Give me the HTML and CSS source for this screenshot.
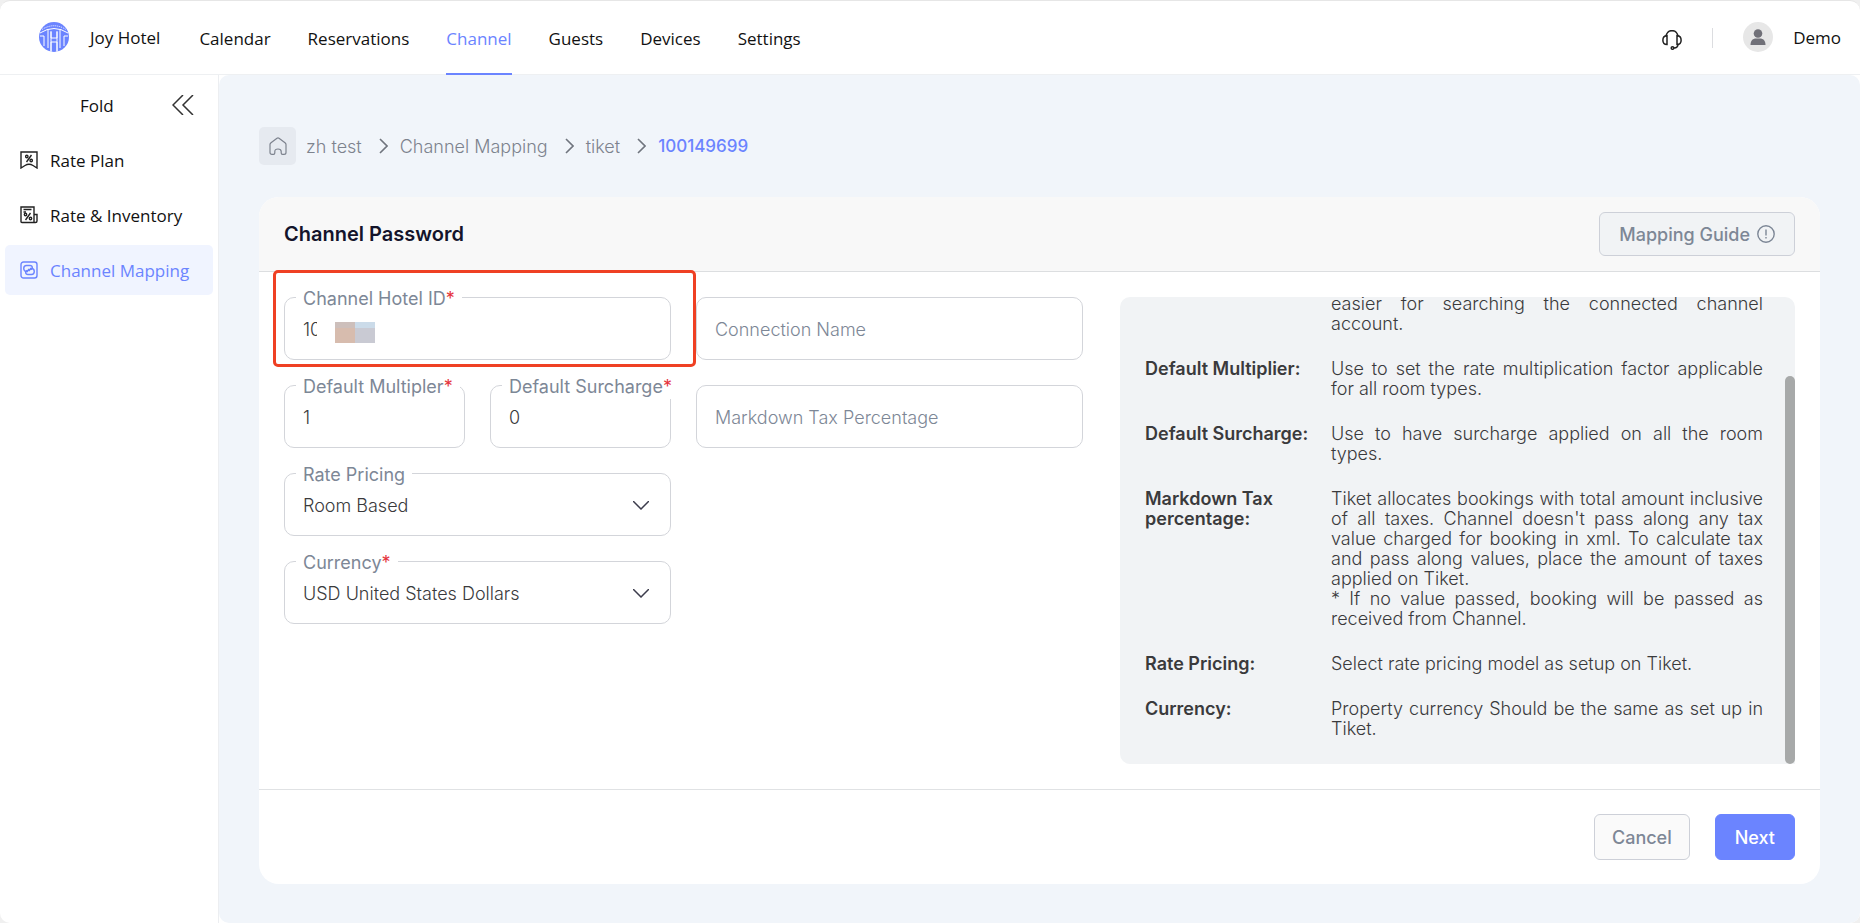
FILE: index.html
```html
<!DOCTYPE html>
<html lang="en">

<head>
    <meta charset="utf-8">
    <title>Channel Mapping</title>
    <link rel="stylesheet" href="styles.css">
</head>

<body>
    <div class="app">
        <header class="topbar">
            <svg class="logo" viewBox="0 0 30 30" width="30" height="30">
                <circle cx="15" cy="15" r="15" fill="#6b84ff" />
                <g stroke="#fff" fill="none">
                    <path d="M1 11Q15 2 29 11" stroke-width="1" />
                    <path d="M3 7.500Q15 0 27 7.500" stroke-width="1" stroke-dasharray="1 1" />
                    <path d="M1 14H5V24M9 8V26M12 10V29M18 10V29M21 8V26M25 24V14H29" stroke-width="1" />
                    <path d="M12 9V16H18V9M12 30V20H18V30" stroke-width="1" />
                </g>
            </svg>
            <span class="hotel-name">Joy Hotel</span>
            <nav class="main-nav">
                <a href="#">Calendar</a>
                <a href="#">Reservations</a>
                <a href="#" class="active">Channel</a>
                <a href="#">Guests</a>
                <a href="#">Devices</a>
                <a href="#">Settings</a>
            </nav>
            <div class="user-area">
                <button class="support" aria-label="Support">
                    <svg viewBox="0 0 20 20" width="20" height="20" fill="none" stroke="#222" stroke-width="1.500">
                        <path d="M4 7C4 -1.500 16 -1.500 16 7" />
                        <path d="M5 5.500V14.500C-.500 14.500 -.500 6 5 5.500ZM15 5.500V14.500C20.500 14.500 20.500 6 15 5.500Z" />
                        <path d="M16 14C16 17 14 18 12 18" />
                        <circle cx="10.500" cy="18" r="1.300" />
                    </svg>
                </button>
                <span class="divider"></span>
                <svg class="avatar" viewBox="0 0 30 30" width="30" height="30">
                    <circle cx="15" cy="15" r="15" fill="#e7e7e7" />
                    <circle cx="15" cy="11.500" r="4.300" fill="#707078" />
                    <path d="M7.500 23C7.500 18.500 10 16.500 13 16.500H17C20 16.500 22.500 18.500 22.500 23Z" fill="#707078" />
                </svg>
                <span>Demo</span>
            </div>
        </header>

        <div class="layout">
            <aside class="sidebar">
                <div class="fold">
                    <span>Fold</span>
                    <button aria-label="Fold menu">
                        <svg viewBox="0 0 22 20" width="22" height="20" fill="none" stroke="#333" stroke-width="1.500">
                            <path d="M11 0L1 10L11 20M21 0L11 10L21 20" />
                        </svg>
                    </button>
                </div>
                <nav class="side-nav">
                    <a href="#">
                        <svg viewBox="0 0 18 18" width="18" height="18" fill="none" stroke="#222" stroke-width="1.400">
                            <path d="M1 1H17V17L13 14.500Q9 12 5 14.500L1 17Z" />
                            <path d="M11.500 4L6.500 11" />
                            <circle cx="6.800" cy="5.500" r="1.200" />
                            <circle cx="11.200" cy="9.500" r="1.200" />
                        </svg>
                        Rate Plan
                    </a>
                    <a href="#">
                        <svg viewBox="0 0 18 18" width="18" height="18" fill="none" stroke="#222" stroke-width="1.400">
                            <path d="M1 1H14V16.500H2Q1 16.500 1 15.500ZM14 8.500H17V15Q17 16.500 15.500 16.500H13M3.500 3.500H11.500M3.500 6H6" />
                            <path d="M10.500 7L5.500 14" />
                            <circle cx="5.500" cy="8.500" r="1.200" />
                            <circle cx="10.500" cy="12.500" r="1.200" />
                        </svg>
                        Rate &amp; Inventory
                    </a>
                    <a href="#" class="active">
                        <svg viewBox="0 0 18 18" width="18" height="18" fill="none" stroke="#6b84ff" stroke-width="1.400">
                            <rect x="1" y="1" width="16" height="16" rx="2.500" />
                            <path d="M8 10.500H6.500C2.800 10.500 2.800 4.500 6.500 4.500H10C13 4.500 13 8.500 10.500 8.500H8" />
                            <path d="M10 7.500H11.500C15.200 7.500 15.200 13.500 11.500 13.500H8C5 13.500 5 9.500 7.500 9.500H10" />
                        </svg>
                        Channel Mapping
                    </a>
                </nav>
            </aside>

            <main class="content">
                <nav class="breadcrumb">
                    <a href="#" class="home" aria-label="Home">
                        <svg viewBox="0 0 18 18" width="18" height="18" fill="none" stroke="#7d838e" stroke-width="1.200">
                            <path d="M1 7.500Q1 6.500 2 5.700L8 1.200Q9 .500 10 1.200L16 5.700Q17 6.500 17 7.500V15.500Q17 17.400 15 17.400H13.500Q12.200 17.400 12.200 16V14.500Q12.200 12 9 12Q5.800 12 5.800 14.500V16Q5.800 17.400 4.500 17.400H3Q1 17.400 1 15.500Z" />
                        </svg>
                    </a>
                    <a href="#">zh test</a>
                    <svg class="sep" viewBox="0 0 9 16" width="9" height="16"><path d="M1 1L8 8L1 15" /></svg>
                    <a href="#">Channel Mapping</a>
                    <svg class="sep" viewBox="0 0 9 16" width="9" height="16"><path d="M1 1L8 8L1 15" /></svg>
                    <a href="#">tiket</a>
                    <svg class="sep" viewBox="0 0 9 16" width="9" height="16"><path d="M1 1L8 8L1 15" /></svg>
                    <span class="current">100149699</span>
                </nav>

                <section class="card">
                    <div class="card-header">
                        <h1>Channel Password</h1>
                        <button class="btn guide">
                            Mapping Guide
                            <svg viewBox="0 0 18 18" width="18" height="18" fill="none" stroke="#7d8796" stroke-width="1.400">
                                <circle cx="9" cy="9" r="8.200" />
                                <path d="M9 4.500V10.500M9 12V13.500" />
                            </svg>
                        </button>
                    </div>

                    <div class="card-body">
                        <form class="fields" id="channelForm">
                            <div class="field half highlight">
                                <label for="hotelId">Channel Hotel ID<span class="req">*</span></label>
                                <input type="text" id="hotelId" value="10">
                                <div class="mosaic"><i></i><i></i><i></i><i></i></div>
                            </div>
                            <div class="field half">
                                <input type="text" id="connectionName" placeholder="Connection Name" aria-label="Connection Name">
                            </div>
                            <div class="field">
                                <label for="multiplier">Default Multipler<span class="req">*</span></label>
                                <input type="text" id="multiplier" value="1">
                            </div>
                            <div class="field">
                                <label for="surcharge">Default Surcharge<span class="req">*</span></label>
                                <input type="text" id="surcharge" value="0">
                            </div>
                            <div class="field half">
                                <input type="text" id="markdownTax" placeholder="Markdown Tax Percentage" aria-label="Markdown Tax Percentage">
                            </div>
                            <div class="field half first">
                                <label for="ratePricing">Rate Pricing</label>
                                <select id="ratePricing">
                                    <option>Room Based</option>
                                </select>
                                <svg class="arrow" viewBox="0 0 16 9" width="16" height="9"><path d="M0 0L8 8L16 0" /></svg>
                            </div>
                            <div class="field half first">
                                <label for="currency">Currency<span class="req">*</span></label>
                                <select id="currency">
                                    <option>USD United States Dollars</option>
                                </select>
                                <svg class="arrow" viewBox="0 0 16 9" width="16" height="9"><path d="M0 0L8 8L16 0" /></svg>
                            </div>
                        </form>

                        <div class="help">
                            <dl>
                                <dt></dt>
                                <dd>easier for searching the connected channel account.</dd>
                                <dt>Default Multiplier:</dt>
                                <dd>Use to set the rate multiplication factor applicable for all room types.</dd>
                                <dt>Default Surcharge:</dt>
                                <dd>Use to have surcharge applied on all the room types.</dd>
                                <dt>Markdown Tax percentage:</dt>
                                <dd>Tiket allocates bookings with total amount inclusive of all taxes. Channel doesn't pass along any tax value charged for booking in xml. To calculate tax and pass along values, place the amount of taxes applied on Tiket.<br>* If no value passed, booking will be passed as received from Channel.</dd>
                                <dt>Rate Pricing:</dt>
                                <dd>Select rate pricing model as setup on Tiket.</dd>
                                <dt>Currency:</dt>
                                <dd>Property currency Should be the same as set up in Tiket.</dd>
                            </dl>
                            <span class="scroll-thumb"></span>
                        </div>
                    </div>

                    <div class="card-footer">
                        <button class="btn cancel">Cancel</button>
                        <button class="btn next" type="submit" form="channelForm">Next</button>
                    </div>
                </section>
            </main>
        </div>
    </div>
</body>

</html>
```
FILE: styles.css
```css
* {
    box-sizing: border-box;
}

body {
    margin: 0;
    background: #f0f0f0;
    font-family: "Open Sans", "Noto Sans", sans-serif;
    font-size: 17px;
    color: #111;
}

a {
    color: inherit;
    text-decoration: none;
}

button {
    font-family: inherit;
    cursor: pointer;
}

.app {
    display: flex;
    flex-direction: column;
    min-height: 100vh;
    background: #fff;
    border-top: 1px solid #e6e6e6;
    border-radius: 10px;
    overflow: hidden;
}

/* top bar */
.topbar {
    display: flex;
    align-items: center;
    height: 74px;
    padding: 0 19px 0 39px;
    border-bottom: 1px solid #eef0f2;
}

.logo,
.avatar {
    margin-bottom: 2px;
}

.hotel-name {
    margin: 0 39px 0 21px;
}

.main-nav {
    display: flex;
    align-self: stretch;
    gap: 37px;
}

.main-nav a {
    display: flex;
    align-items: center;
    margin-bottom: -1px;
    border-top: 2px solid transparent;
    border-bottom: 2px solid transparent;
}

.main-nav a.active {
    color: #6b84ff;
    border-bottom-color: #6b84ff;
}

.user-area {
    display: flex;
    align-items: center;
    margin-left: auto;
}

.support {
    display: flex;
    margin-top: 4px;
    padding: 0;
    border: none;
    background: none;
}

.divider {
    width: 1px;
    height: 20px;
    margin: 0 30px;
    background: #dcdde0;
}

.avatar {
    margin-right: 20px;
}

.layout {
    display: flex;
    flex: 1;
}

/* side menu */
.sidebar {
    flex: none;
    width: 219px;
    border-right: 1px solid #eceef1;
}

.fold {
    display: flex;
    align-items: center;
    justify-content: space-between;
    height: 60px;
    padding: 0 24px 0 80px;
}

.fold button {
    display: flex;
    padding: 0;
    border: none;
    background: none;
}

.side-nav {
    display: flex;
    flex-direction: column;
    gap: 5px;
    padding: 0 5px;
}

.side-nav a {
    display: flex;
    align-items: center;
    gap: 12px;
    height: 50px;
    padding: 0 15px;
    border-radius: 5px;
}

.side-nav a.active {
    background: #f0f4ff;
    color: #6b84ff;
}

/* page content */
.content {
    flex: 1;
    padding: 52px 40px 39px;
    background: #f1f5fa;
    border-radius: 10px;
    font-family: Inter, "Noto Sans", sans-serif;
    font-size: 18px;
    font-weight: 300;
}

.breadcrumb {
    display: flex;
    align-items: center;
    height: 38px;
    margin-bottom: 32px;
    color: #7d838e;
}

.home {
    display: flex;
    align-items: center;
    justify-content: center;
    width: 37px;
    height: 38px;
    margin-right: 10px;
    border-radius: 5px;
    background: #e6eaf0;
}

.sep {
    margin: 0 12px 0 17px;
    fill: none;
    stroke: #70757e;
    stroke-width: 1.6;
}

.current {
    color: #6b84ff;
    font-size: 17px;
    font-weight: 500;
}

.card {
    background: #fff;
    border-radius: 20px;
}

.card-header {
    display: flex;
    align-items: center;
    justify-content: space-between;
    height: 75px;
    padding: 0 25px;
    background: #f8f8f8;
    border-bottom: 1px solid #dcdee0;
    border-radius: 20px 20px 0 0;
}

.card-header h1 {
    margin: 0;
    font-size: 20px;
    font-weight: 600;
    color: #14142b;
}

.btn {
    display: flex;
    align-items: center;
    justify-content: center;
    height: 46px;
    border: 1px solid #cdd0d8;
    border-radius: 6px;
    background: #fafafa;
    font-size: 18px;
    font-weight: 500;
    color: #7d8796;
}

.guide {
    gap: 7px;
    height: 44px;
    padding: 0 19px;
    background: #f1f3f5;
}

.card-body {
    display: grid;
    grid-template-columns: 799fr 675fr;
    align-items: start;
    gap: 37px;
    padding: 25px;
}

/* form */
.fields {
    display: grid;
    grid-template-columns: repeat(4, 1fr);
    gap: 25px;
}

.field {
    position: relative;
    height: 63px;
}

.field.half {
    grid-column: span 2;
}

.field.first {
    grid-column: 1 / span 2;
}

.field label {
    position: absolute;
    top: -10px;
    left: 12px;
    padding: 0 7px;
    background: #fff;
    line-height: 24px;
    font-weight: 400;
    color: #7d8796;
    white-space: nowrap;
}

.req {
    color: #e5343d;
}

.field input,
.field select {
    width: 100%;
    height: 100%;
    padding: 2px 18px 0;
    border: 1px solid #d3d5da;
    border-radius: 10px;
    background: #fff;
    font: inherit;
    color: #3a3a3c;
    appearance: none;
}

.field input::placeholder {
    color: #7d8796;
    opacity: 1;
}

.arrow {
    position: absolute;
    top: 28px;
    right: 22px;
    fill: none;
    stroke: #3c3c4c;
    stroke-width: 1.5;
    pointer-events: none;
}

.highlight::after {
    content: "";
    position: absolute;
    inset: -27px -25px -7px -11px;
    border: 3px solid #ef4023;
    border-radius: 5px;
    pointer-events: none;
}

.mosaic {
    position: absolute;
    top: 25px;
    left: 33px;
    display: grid;
    grid-template: 6px 15px / 20px 20px;
    padding-left: 18px;
    background: #fff;
}

.mosaic i:nth-child(1) {
    background: #cdbfbb;
}

.mosaic i:nth-child(2) {
    background: #cbdbe9;
}

.mosaic i:nth-child(3) {
    background: #d7bcae;
}

.mosaic i:nth-child(4) {
    background: #c9cad3;
}

/* help panel */
.help {
    position: relative;
    display: flex;
    align-items: flex-end;
    height: 467px;
    overflow: hidden;
    padding: 0 32px 25px 25px;
    border-radius: 10px 10px 0 10px;
    background: #f1f3f5;
    color: #3a3a3c;
}

.help dl {
    display: grid;
    grid-template-columns: 166px 1fr;
    gap: 25px 20px;
    width: 100%;
    margin: 0;
    line-height: 20px;
}

.help dt {
    font-weight: 600;
}

.help dd {
    margin: 0;
    text-align: justify;
}

.scroll-thumb {
    position: absolute;
    top: 79px;
    right: 0;
    bottom: 0;
    width: 10px;
    border-radius: 5px;
    background: #a7a9a9;
}

.card-footer {
    display: flex;
    justify-content: flex-end;
    gap: 25px;
    padding: 24px 25px;
    border-top: 1px solid #e0e2e4;
}

.cancel {
    padding: 0 17px;
}

.next {
    padding: 0 19px;
    border-color: #6b84ff;
    background: #6b84ff;
    color: #fff;
}
```
